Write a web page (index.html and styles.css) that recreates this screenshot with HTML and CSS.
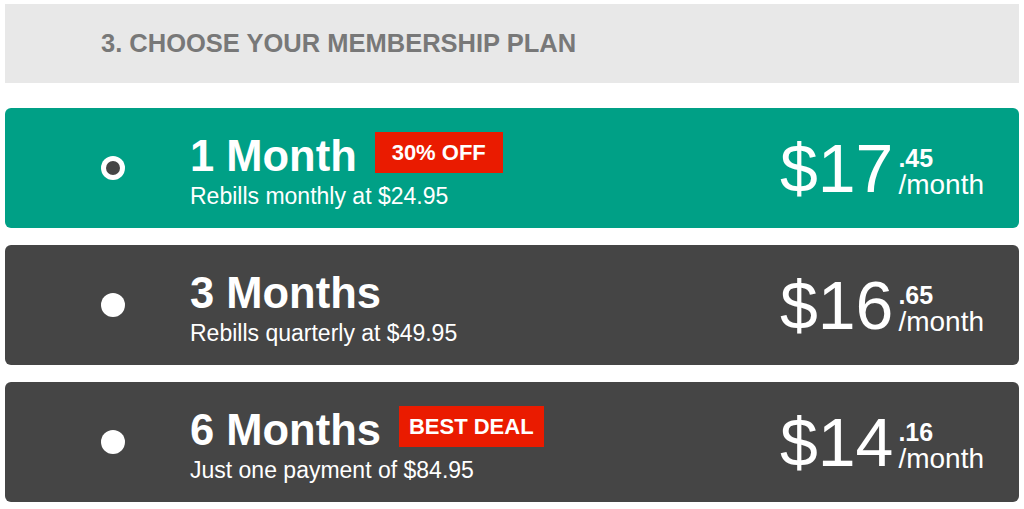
FILE: index.html
```html
<!DOCTYPE html>
<html>
<head>
<meta charset="utf-8">
<link rel="stylesheet" href="styles.css">
</head>
<body>
<div class="page">
  <div class="header"><h2 class="header-title">3. CHOOSE YOUR MEMBERSHIP PLAN</h2></div>

  <div class="plan plan-selected">
    <span class="radio radio-on"></span>
    <div class="info">
      <div class="title-row">
        <span class="title">1 Month</span>
        <span class="badge">30% OFF</span>
      </div>
      <div class="sub">Rebills monthly at $24.95</div>
    </div>
    <div class="price">
      <span class="price-main">$17</span>
      <span class="price-side">
        <span class="cents">.45</span>
        <span class="per">/month</span>
      </span>
    </div>
  </div>

  <div class="plan">
    <span class="radio"></span>
    <div class="info">
      <div class="title-row">
        <span class="title">3 Months</span>
      </div>
      <div class="sub">Rebills quarterly at $49.95</div>
    </div>
    <div class="price">
      <span class="price-main">$16</span>
      <span class="price-side">
        <span class="cents">.65</span>
        <span class="per">/month</span>
      </span>
    </div>
  </div>

  <div class="plan">
    <span class="radio"></span>
    <div class="info">
      <div class="title-row">
        <span class="title">6 Months</span>
        <span class="badge">BEST DEAL</span>
      </div>
      <div class="sub">Just one payment of $84.95</div>
    </div>
    <div class="price">
      <span class="price-main">$14</span>
      <span class="price-side">
        <span class="cents">.16</span>
        <span class="per">/month</span>
      </span>
    </div>
  </div>
</div>
</body>
</html>
```
FILE: styles.css
```css
html, body {
  margin: 0;
  padding: 0;
  background: #ffffff;
  font-family: "Liberation Sans", Arial, sans-serif;
}

.page {
  padding: 4px 5px 0 5px;
  display: flex;
  flex-direction: column;
}

.header {
  height: 79px;
  background: #e8e8e8;
  display: flex;
  align-items: center;
  padding-left: 96px;
  margin-bottom: 25px;
}

.header-title {
  margin: 0;
  font-size: 25.5px;
  font-weight: bold;
  color: #787878;
  line-height: 1;
}

.plan {
  height: 120px;
  border-radius: 6px;
  background: #454545;
  color: #ffffff;
  display: flex;
  align-items: center;
  margin-bottom: 17px;
}

.plan-selected {
  background: #00a086;
}

.radio {
  width: 24px;
  height: 24px;
  border-radius: 50%;
  background: #ffffff;
  margin-left: 96px;
  flex: none;
  display: flex;
  align-items: center;
  justify-content: center;
}

.radio-on::after {
  content: "";
  width: 14px;
  height: 14px;
  border-radius: 50%;
  background: #454545;
}

.info {
  margin-left: 65px;
  padding-top: 6px;
  display: flex;
  flex-direction: column;
}

.title-row {
  display: flex;
  align-items: flex-start;
}

.title {
  font-size: 43.5px;
  font-weight: bold;
  line-height: 44px;
}

.badge {
  margin-left: 18px;
  margin-top: -2px;
  height: 41px;
  min-width: 128px;
  box-sizing: border-box;
  padding: 0 10px;
  background: #ea1b00;
  font-size: 22px;
  font-weight: bold;
  display: flex;
  align-items: center;
  justify-content: center;
}

.sub {
  margin-top: 6px;
  font-size: 23px;
  line-height: 24px;
}

.price {
  margin-left: auto;
  padding-right: 35px;
  display: flex;
  align-items: flex-end;
}

.price-main {
  font-size: 68px;
  line-height: 68px;
}

.price-side {
  display: flex;
  flex-direction: column;
  margin-left: 5px;
  padding-bottom: 2px;
}

.cents {
  font-size: 25px;
  font-weight: bold;
  line-height: 23px;
}

.per {
  font-size: 28px;
  line-height: 30px;
}
```
